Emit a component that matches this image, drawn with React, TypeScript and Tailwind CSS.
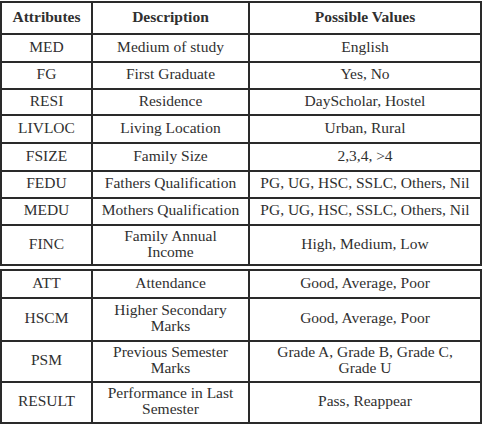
const top = [
  { a: 'MED', d: ['Medium of study'], v: ['English'], h: 'h-[26px]' },
  { a: 'FG', d: ['First Graduate'], v: ['Yes, No'], h: 'h-[25px]' },
  { a: 'RESI', d: ['Residence'], v: ['DayScholar, Hostel'], h: 'h-[24px]' },
  { a: 'LIVLOC', d: ['Living Location'], v: ['Urban, Rural'], h: 'h-[26px]' },
  { a: 'FSIZE', d: ['Family Size'], v: ['2,3,4, >4'], h: 'h-[26px]' },
  { a: 'FEDU', d: ['Fathers Qualification'], v: ['PG, UG, HSC, SSLC, Others, Nil'], h: 'h-[25px]' },
  { a: 'MEDU', d: ['Mothers Qualification'], v: ['PG, UG, HSC, SSLC, Others, Nil'], h: 'h-[25px]' },
  { a: 'FINC', d: ['Family Annual', 'Income'], v: ['High, Medium, Low'], h: 'h-[38px]' },
];

const bottom = [
  { a: 'ATT', d: ['Attendance'], v: ['Good, Average, Poor'], h: 'h-[26px]' },
  { a: 'HSCM', d: ['Higher Secondary', 'Marks'], v: ['Good, Average, Poor'], h: 'h-[41px]' },
  { a: 'PSM', d: ['Previous Semester', 'Marks'], v: ['Grade A, Grade B, Grade C,', 'Grade U'], h: 'h-[39px]' },
  { a: 'RESULT', d: ['Performance in Last', 'Semester'], v: ['Pass, Reappear'], h: 'h-[39px]' },
];

type Row = { a: string; d: string[]; v: string[]; h: string };

const Cell = ({ lines, last, h, bold }: { lines: string[]; last?: boolean; h: string; bold?: boolean }) => (
  <div
    className={`${h} flex flex-col items-center justify-center pb-[3px] text-center leading-[16px] border-[#2a2a2a] ${last ? '' : 'border-r-2'} ${bold ? 'font-bold' : ''}`}
  >
    {lines.map((l, i) => (
      <span key={i} className="whitespace-nowrap">{l}</span>
    ))}
  </div>
);

function Block({ rows, header }: { rows: Row[]; header?: boolean }) {
  const all: Row[] = header
    ? [{ a: 'Attributes', d: ['Description'], v: ['Possible Values'], h: 'h-[30px]' }, ...rows]
    : rows;
  return (
    <div className="w-[482px] border-2 border-[#2a2a2a]">
      {all.map((r, i) => (
        <div
          key={r.a}
          className={`grid grid-cols-[91px_157px_1fr] ${i < all.length - 1 ? 'border-b-2 border-[#2a2a2a]' : ''}`}
        >
          <Cell lines={[r.a]} h={r.h} bold={header && i === 0} />
          <Cell lines={r.d} h={r.h} bold={header && i === 0} />
          <Cell lines={r.v} h={r.h} last bold={header && i === 0} />
        </div>
      ))}
    </div>
  );
}

export default function App() {
  return (
    <div className="w-[483px] h-[426px] bg-white pt-px flex flex-col gap-[3px] text-[15.5px] text-[#303030] font-['Liberation_Serif','Times_New_Roman',serif]">
      <Block rows={top} header />
      <Block rows={bottom} />
    </div>
  );
}
